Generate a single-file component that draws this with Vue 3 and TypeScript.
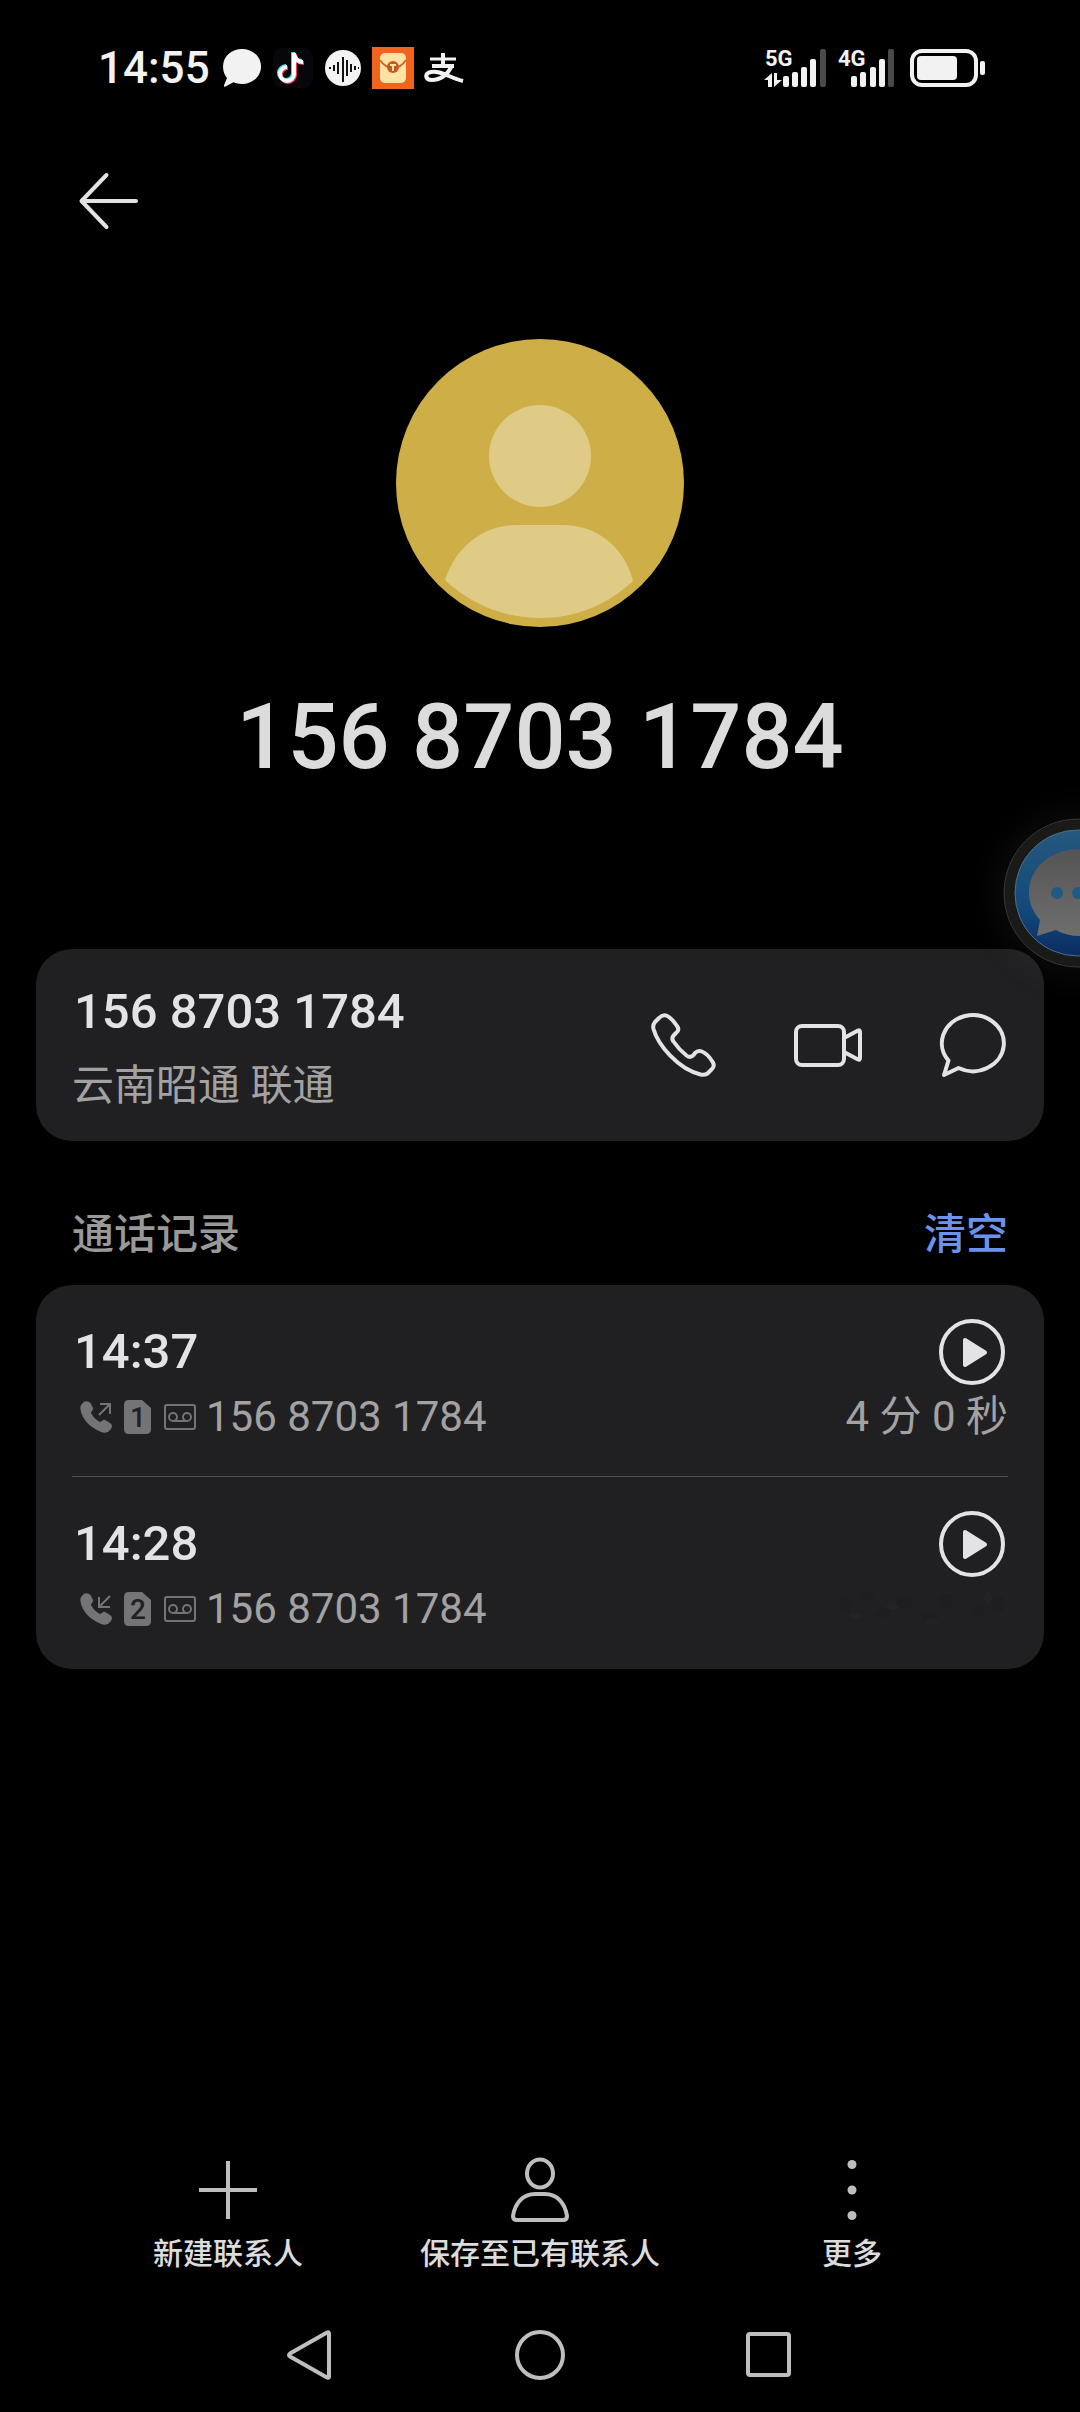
<script setup lang="ts">
interface CallRecord {
  time: string
  direction: 'out' | 'in'
  sim: number
  phone: string
  duration: string
}

const phone = '156 8703 1784'

const records: CallRecord[] = [
  { time: '14:37', direction: 'out', sim: 1, phone, duration: '4 分 0 秒' },
  { time: '14:28', direction: 'in', sim: 2, phone, duration: '' },
]
</script>

<template>
  <div class="page">
    <header class="status">
      <span class="clock">14:55</span>
      <div class="notices">
        <svg class="notice" width="40" height="42" viewBox="0 0 40 42">
          <path d="M20 2C30 2 39 9 39 19.500S30 37 20 37c-3.500 0-6-.7-8.500-1.700L3.500 39.500c-1.200.6-1.800-.2-1.500-1.200l3-7.300C2.400 28 1 24 1 19.500 1 9 10 2 20 2z" fill="#f2f2f2" />
        </svg>
        <svg class="notice" width="42" height="42" viewBox="0 0 42 42">
          <rect x="1" y="1" width="40" height="40" rx="9" fill="#06060b" />
          <g fill="none" stroke-width="4">
            <path d="M22 6v21a7 7 0 1 1-7-7M22 7c1 5 4 8 9 8" stroke="#2fe3e0" transform="translate(-1 -1)" />
            <path d="M22 6v21a7 7 0 1 1-7-7M22 7c1 5 4 8 9 8" stroke="#f5365c" transform="translate(1 1)" />
            <path d="M22 6v21a7 7 0 1 1-7-7M22 7c1 5 4 8 9 8" stroke="#fff" />
          </g>
        </svg>
        <svg class="notice" width="38" height="42" viewBox="0 0 38 42">
          <circle cx="19" cy="21" r="18" fill="#f2f2f2" />
          <path d="M5 21h2M10 18v6M14 15v12M19 10v25M23 13v16M27 17v8M31 19v4M34 21h1" stroke="#111" stroke-width="2" />
        </svg>
        <svg class="notice" width="42" height="42" viewBox="0 0 42 42">
          <rect width="42" height="42" fill="#f0641e" />
          <rect x="8" y="6" width="26" height="30" rx="5" fill="#ffe3a6" />
          <path d="M8 13c4 6 8 8 13 8s9-2 13-8" fill="none" stroke="#c46a2c" stroke-width="2" />
          <circle cx="21" cy="20" r="6" fill="#c9571e" />
          <path d="M18 18h6M21 18v6" stroke="#ffe3a6" stroke-width="2" />
        </svg>
        <svg class="notice" width="42" height="42" viewBox="0 0 42 42" fill="none" stroke="#f2f2f2">
          <path d="M6 12h26" stroke-width="3" />
          <path d="M19 6v13M8 19h22" stroke-width="4" />
          <path d="M28 18C24 28 16 33 8 33c-7 0-8-7-1-8 9-2 19 6 32 9" stroke-width="4" />
        </svg>
      </div>
      <div class="signals">
        <svg width="64" height="52" viewBox="0 -6 64 52">
          <text class="net" x="1" y="18">5G</text>
          <path d="M0 32l8-7v14H4v-7zM18 32l-8 7V25h3v7z" fill="#f2f2f2" />
          <g fill="#f2f2f2">
            <rect x="19" y="28" width="6" height="11" rx="2" />
            <rect x="28" y="24" width="6" height="15" rx="2" />
            <rect x="37" y="19" width="6" height="20" rx="2" />
            <rect x="46" y="11" width="6" height="28" rx="2" />
          </g>
          <rect x="56" y="1" width="6" height="38" rx="2" fill="#4a4a4a" />
        </svg>
        <svg width="60" height="52" viewBox="0 -6 60 52">
          <text class="net" x="0" y="18">4G</text>
          <g fill="#f2f2f2">
            <rect x="13" y="28" width="6" height="11" rx="2" />
            <rect x="22" y="24" width="6" height="15" rx="2" />
            <rect x="32" y="19" width="6" height="20" rx="2" />
            <rect x="41" y="11" width="6" height="28" rx="2" />
          </g>
          <rect x="50" y="1" width="6" height="38" rx="2" fill="#4a4a4a" />
        </svg>
        <svg class="battery" width="76" height="40" viewBox="0 0 76 40">
          <rect x="2" y="3" width="64" height="34" rx="10" fill="none" stroke="#f2f2f2" stroke-width="4" />
          <rect x="7" y="8" width="40" height="24" rx="4" fill="#f2f2f2" />
          <rect x="70" y="13" width="5" height="14" rx="2" fill="#f2f2f2" />
        </svg>
      </div>
    </header>

    <nav class="topbar">
      <button class="icon-btn" type="button" aria-label="返回">
        <svg width="72" height="72" viewBox="0 0 72 72" class="line">
          <path d="M34.500 10L9.500 36l25 26M11 36h53" />
        </svg>
      </button>
    </nav>

    <main class="content">
      <svg class="avatar" width="288" height="288" viewBox="0 0 288 288">
        <circle cx="144" cy="144" r="144" fill="#ceae46" />
        <circle cx="144" cy="117" r="51" fill="#dfcb85" />
        <path d="M49 241C60 207 88 186 121 186h46c33 0 61 21 70 56-26 24-57 37-93 37s-70-14-95-38z" fill="#dfcb85" />
      </svg>
      <h1 class="title">{{ phone }}</h1>

      <section class="card contact">
        <div class="contact-text">
          <span class="primary">{{ phone }}</span>
          <span class="region">云南昭通 联通</span>
        </div>
        <div class="actions">
          <button class="icon-btn" type="button" aria-label="拨打">
            <svg width="72" height="72" viewBox="0 0 72 72" class="line">
              <path d="M11 9q4.500-5 10-1c4 3 6 6 8 9q3 4-1 7l-2 2q-3 3-.5 6.500c4 6 8 10 13 14q4 3 7-.5l1.500-2q3-3 7-1.500c5 2 8 6 11 11q2 4-1.500 7l-4 4q-3 2-7 1C30 60 10 36 5.500 20q-1-4 1.500-7z" />
            </svg>
          </button>
          <button class="icon-btn" type="button" aria-label="视频通话">
            <svg width="72" height="72" viewBox="0 0 72 72" class="line">
              <rect x="4" y="17" width="48" height="39" rx="6" />
              <path d="M52 29l14-7.500q2-.8 2 1.500v26q0 2.300-2 1.500L52 43" />
            </svg>
          </button>
          <button class="icon-btn" type="button" aria-label="短信">
            <svg width="72" height="72" viewBox="0 0 72 72" class="line">
              <path d="M12.500 51.500A31 28 0 1 1 22.500 59L8 66z" />
            </svg>
          </button>
        </div>
      </section>

      <div class="section-head">
        <h2 class="section-title">通话记录</h2>
        <button class="clear" type="button">清空</button>
      </div>

      <ul class="card records">
        <li v-for="record in records" :key="record.time" class="record">
          <div class="record-top">
            <span class="primary">{{ record.time }}</span>
            <button class="icon-btn play" type="button" aria-label="播放录音">
              <svg width="72" height="66" viewBox="0 0 72 66">
                <circle cx="36" cy="33" r="31" fill="none" stroke="#e3e3e5" stroke-width="4" />
                <path d="M29 21v25l20-12.500z" fill="#e3e3e5" stroke="#e3e3e5" stroke-width="4" stroke-linejoin="round" />
              </svg>
            </button>
          </div>
          <div class="record-sub">
            <div class="marks">
              <svg width="32" height="34" viewBox="0 0 32 34">
                <path d="M2 4c3-4 7-3 9 0l2 4c1 2-2 3-2 5 2 4 5 7 9 9 2 0 3-3 5-2l5 3c3 2 2 5 0 7-3 4-8 3-13 0C9 26 3 19 1 12 0 8 0 6 2 4z" fill="#747476" />
                <path v-if="record.direction === 'out'" d="M19 15L30 4M20 4h10v10" fill="none" stroke="#747476" stroke-width="2" />
                <path v-else d="M30 4L19 15M19 5v10h11" fill="none" stroke="#747476" stroke-width="2" />
              </svg>
              <svg width="28" height="34" viewBox="0 0 28 34">
                <path d="M5 0h13l9 8v21q0 5-5 5H5q-5 0-5-5V5q0-5 5-5z" fill="#747476" />
                <text class="sim" x="14" y="27" text-anchor="middle">{{ record.sim }}</text>
              </svg>
              <svg width="32" height="28" viewBox="0 0 32 28" fill="none" stroke="#747476" stroke-width="2">
                <rect x="1" y="2" width="30" height="24" rx="2" />
                <circle cx="9" cy="14" r="4" />
                <circle cx="23" cy="14" r="4" />
                <path d="M9 18h14" />
              </svg>
            </div>
            <span class="secondary">{{ record.phone }}</span>
            <span v-if="record.duration" class="secondary duration">{{ record.duration }}</span>
            <svg v-else class="duration" width="170" height="46" viewBox="0 0 170 46">
              <g fill="#1e1e20">
                <ellipse cx="8" cy="19" rx="6" ry="9" />
                <ellipse cx="28" cy="10" rx="8" ry="4" />
                <ellipse cx="44" cy="27" rx="9" ry="4" />
                <ellipse cx="66" cy="16" rx="8" ry="6" />
                <ellipse cx="90" cy="30" rx="9" ry="5" />
                <ellipse cx="108" cy="15" rx="7" ry="7" />
                <ellipse cx="140" cy="25" rx="7" ry="6" />
                <ellipse cx="160" cy="18" rx="7" ry="8" />
              </g>
              <g fill="#242426">
                <ellipse cx="18" cy="30" rx="7" ry="3" />
                <ellipse cx="54" cy="21" rx="6" ry="3" />
                <ellipse cx="94" cy="36" rx="6" ry="3" />
                <ellipse cx="150" cy="12" rx="4" ry="6" />
              </g>
            </svg>
          </div>
        </li>
      </ul>
    </main>

    <footer class="toolbar">
      <button class="tool" type="button">
        <svg width="72" height="72" viewBox="0 0 72 72" class="line dim flat">
          <path d="M36 7v58M7 36h58" />
        </svg>
        <span>新建联系人</span>
      </button>
      <button class="tool" type="button">
        <svg width="72" height="72" viewBox="0 0 72 72" class="line dim">
          <ellipse cx="36" cy="19.500" rx="13" ry="14" />
          <path d="M31 40h10c12 0 20 9 22 22q0 4-4 4H13q-4 0-4-4C11 49 19 40 31 40z" />
        </svg>
        <span>保存至已有联系人</span>
      </button>
      <button class="tool" type="button">
        <svg width="72" height="72" viewBox="0 0 72 72" fill="#bebebe">
          <circle cx="36" cy="10.500" r="4.500" />
          <circle cx="36" cy="36" r="4.500" />
          <circle cx="36" cy="61.500" r="4.500" />
        </svg>
        <span>更多</span>
      </button>
    </footer>

    <nav class="system">
      <button class="icon-btn" type="button" aria-label="系统返回">
        <svg width="72" height="72" viewBox="0 0 72 72" class="line dim">
          <path d="M53 13.500q2-1 2 1v43q0 2-2 1L16 37.500q-2-1.500 0-3z" />
        </svg>
      </button>
      <button class="icon-btn" type="button" aria-label="主屏幕">
        <svg width="72" height="72" viewBox="0 0 72 72" class="line dim">
          <circle cx="36" cy="36" r="23" />
        </svg>
      </button>
      <button class="icon-btn" type="button" aria-label="最近任务">
        <svg width="72" height="72" viewBox="0 0 72 72" class="line dim">
          <rect x="14" y="15" width="41" height="41" rx="2" />
        </svg>
      </button>
    </nav>

    <button class="floating" type="button" aria-label="悬浮消息">
      <svg width="150" height="150" viewBox="0 0 150 150">
        <defs>
          <linearGradient id="bubble-blue" x1="0" y1="0" x2="0" y2="1">
            <stop offset="0" stop-color="#25587c" />
            <stop offset="0.600" stop-color="#134a7c" />
            <stop offset="1" stop-color="#0b2c63" />
          </linearGradient>
          <linearGradient id="bubble-grey" x1="0" y1="0" x2="0" y2="1">
            <stop offset="0" stop-color="#545454" />
            <stop offset="1" stop-color="#6e6e6e" />
          </linearGradient>
        </defs>
        <circle cx="75" cy="75" r="74" fill="#1a1a19" stroke="#3a3a39" />
        <circle cx="75" cy="75" r="63" fill="url(#bubble-blue)" stroke="#4d7188" />
        <path d="M77 31c29 0 50 19 50 43s-21 44-50 44c-9 0-17-2-24-6l-19 6 3-16c-7-8-11-17-11-28 0-24 22-43 51-43z" fill="url(#bubble-grey)" />
        <g fill="#1f5a83">
          <circle cx="54" cy="75" r="6" />
          <circle cx="75" cy="75" r="6" />
          <circle cx="96" cy="75" r="6" />
        </g>
      </svg>
    </button>
  </div>
</template>

<style>
body {
  margin: 0;
  background: #000;
}
</style>

<style scoped>
.page {
  position: relative;
  display: flex;
  flex-direction: column;
  min-height: 100vh;
  overflow: hidden;
  background: #000;
  color: #e3e3e5;
  font-family: Roboto, "Noto Sans CJK SC", sans-serif;
}

button {
  padding: 0;
  border: 0;
  background: none;
  color: inherit;
  font: inherit;
  cursor: pointer;
}

svg {
  display: block;
  flex: none;
}

.line {
  fill: none;
  stroke: #e3e3e5;
  stroke-width: 4;
  stroke-linecap: round;
  stroke-linejoin: round;
}

.dim {
  stroke: #bebebe;
}

.flat {
  stroke-linecap: butt;
}

.status {
  display: flex;
  align-items: center;
  height: 136px;
  padding: 0 94px 0 98px;
}

.clock {
  color: #f2f2f2;
  font-size: 44px;
  font-weight: 500;
  line-height: 60px;
}

.notices {
  display: flex;
  gap: 10px;
  margin-left: 12px;
}

.signals {
  display: flex;
  align-items: center;
  gap: 10px;
  margin-left: auto;
}

.battery {
  margin-left: 2px;
}

.net {
  fill: #f2f2f2;
  font-family: Roboto, sans-serif;
  font-size: 22px;
  font-weight: 700;
}

.topbar {
  display: flex;
  align-items: center;
  height: 130px;
  padding: 0 72px;
}

.icon-btn {
  display: flex;
  align-items: center;
  justify-content: center;
  width: 72px;
  height: 72px;
}

.content {
  display: flex;
  flex: 1;
  flex-direction: column;
  padding: 73px 36px 0;
}

.avatar {
  align-self: center;
}

.title {
  margin: 57px 0 157px;
  color: #dcdcdc;
  font-size: 90px;
  font-weight: 500;
  line-height: 108px;
  text-align: center;
}

.card {
  border-radius: 36px;
  background: #202022;
}

.contact {
  display: flex;
  align-items: center;
  justify-content: space-between;
  min-height: 192px;
  padding: 0 36px;
}

.contact-text {
  display: flex;
  flex-direction: column;
  gap: 14px;
  padding-top: 8px;
}

.primary {
  padding-left: 2px;
  font-size: 49px;
  font-weight: 500;
  line-height: 60px;
}

.region {
  color: #a2a2a3;
  font-size: 42px;
  line-height: 60px;
}

.actions {
  display: flex;
  gap: 72px;
}

.section-head {
  display: flex;
  justify-content: space-between;
  padding: 64px 36px 20px;
  font-size: 42px;
  font-weight: 500;
  line-height: 60px;
}

.section-title {
  margin: 0;
  color: #999;
  font-size: 42px;
  font-weight: 500;
}

.clear {
  color: #6c92f0;
}

.records {
  margin: 0;
  padding: 0 36px;
  list-style: none;
}

.record {
  box-sizing: border-box;
  height: 192px;
  padding-top: 34px;
}

.record:not(:last-child) {
  border-bottom: 1px solid #505051;
}

.record-top {
  display: flex;
  align-items: center;
  justify-content: space-between;
}

.play {
  height: 66px;
}

.record-sub {
  display: flex;
  align-items: center;
  margin-top: 2px;
  min-height: 60px;
}

.marks {
  display: flex;
  align-items: center;
  gap: 12px;
  padding: 0 10px 0 8px;
}

.sim {
  fill: #202022;
  font-size: 28px;
  font-weight: 500;
}

.secondary {
  color: #a2a2a3;
  font-size: 42px;
  line-height: 60px;
}

.duration {
  margin-left: auto;
}

.toolbar {
  display: flex;
  padding: 0 72px 24px;
}

.tool {
  display: flex;
  flex: 1 1 0;
  flex-direction: column;
  align-items: center;
  gap: 8px;
  color: #dcdcdc;
  font-size: 30px;
  font-weight: 500;
  line-height: 40px;
  white-space: nowrap;
}

.system {
  display: flex;
  align-items: center;
  justify-content: center;
  gap: 158px;
  height: 114px;
}

.floating {
  position: absolute;
  top: 818px;
  right: -73px;
  border-radius: 50%;
  box-shadow: 0 0 40px rgba(90, 90, 90, 0.2);
}
</style>
